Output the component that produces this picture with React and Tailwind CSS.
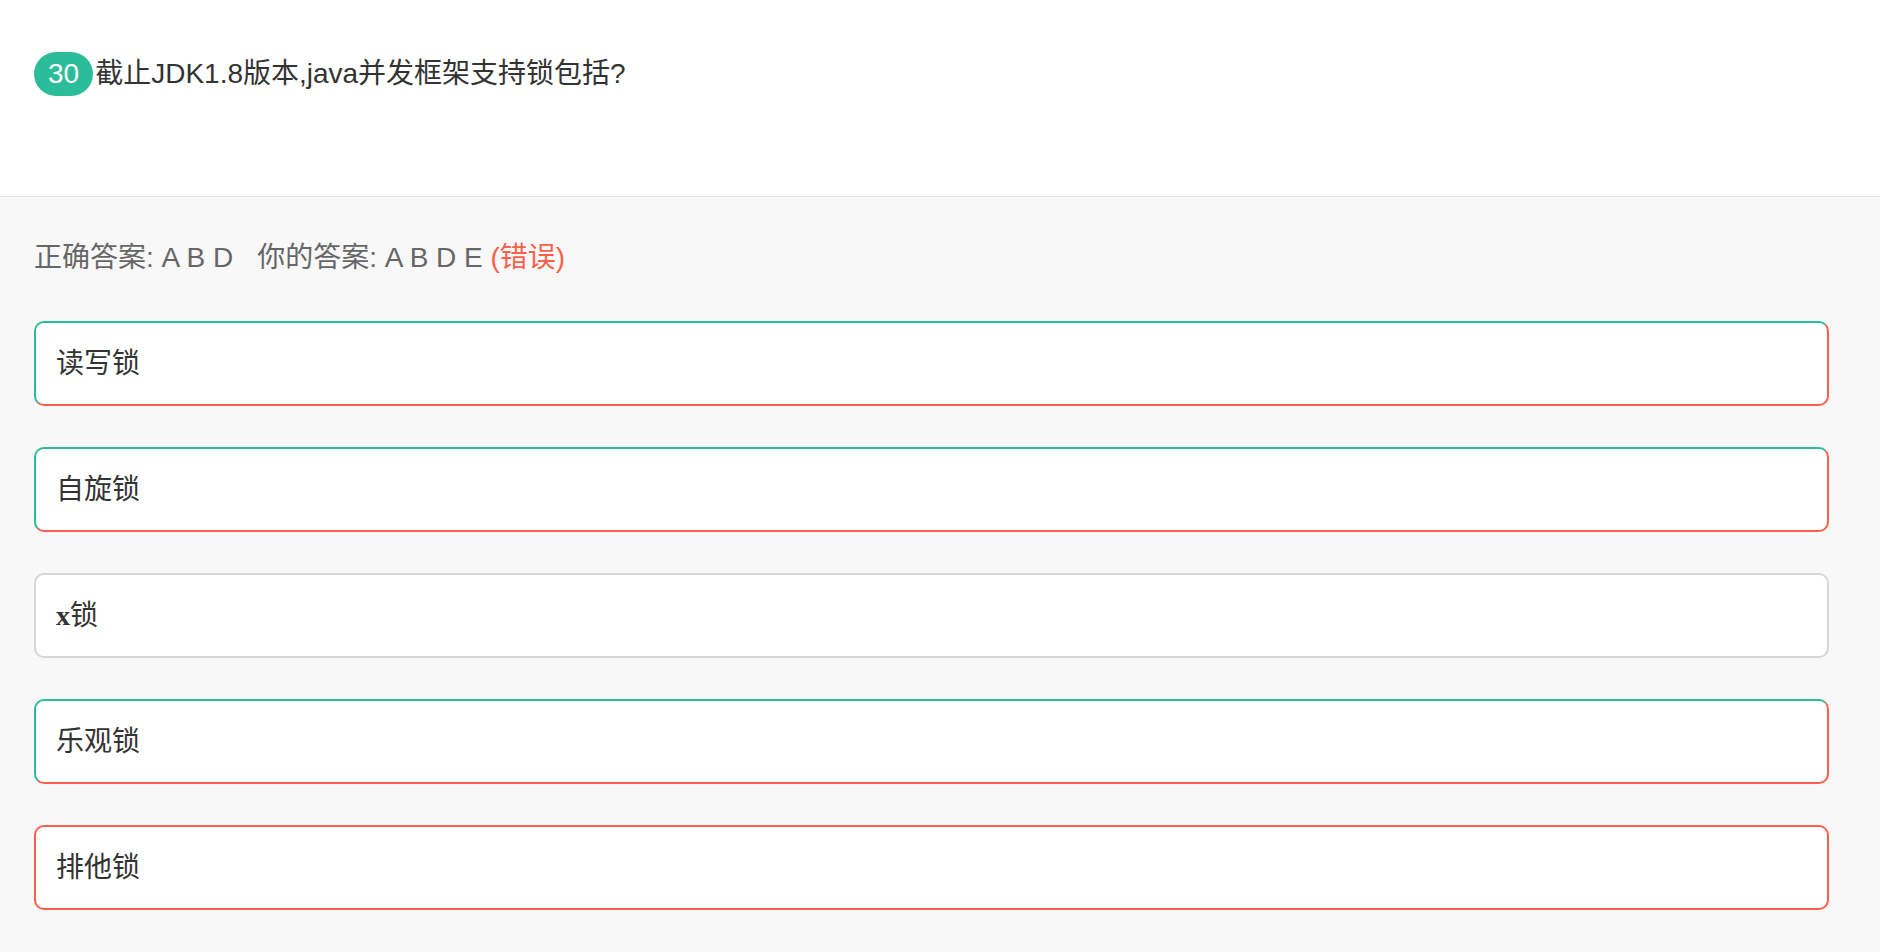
const OPTIONS = [
  { id: "A", text: "读写锁", state: "correct" },
  { id: "B", text: "自旋锁", state: "correct" },
  { id: "C", text: "x锁", state: "none" },
  { id: "D", text: "乐观锁", state: "correct" },
  { id: "E", text: "排他锁", state: "wrong" },
];

const BORDER_STYLES = {
  correct:
    "border-t-[#2bbc9a] border-l-[#2bbc9a] border-r-[#fd5f4b] border-b-[#fd5f4b]",
  wrong: "border-[#fd5f4b]",
  none: "border-[#d6d6d6]",
};

const SANS = "font-['Liberation_Sans','Noto_Sans_CJK_SC',sans-serif]";

// latin letters fall back to a bold serif in the original
function OptionText({ text }) {
  return text.split(/([a-zA-Z]+)/).map((part, i) =>
    /^[a-zA-Z]+$/.test(part) ? (
      <span key={i} className="font-bold">
        {part}
      </span>
    ) : (
      part
    )
  );
}

export default function App() {
  return (
    <div className={`min-h-[952px] bg-[#f8f8f8] ${SANS}`}>
      {/* question header */}
      <div className="h-[197px] bg-white border-b border-[#e6e6e6] pt-[52px] pl-[34px]">
        <div className="flex items-center">
          <span className="h-[44px] px-[14px] rounded-full bg-[#2bbc9a] text-white text-[28px] leading-[44px]">
            30
          </span>
          <span className="ml-[2px] text-[28px] leading-[44px] text-[#333]">
            截止JDK1.8版本,java并发框架支持锁包括?
          </span>
        </div>
      </div>

      {/* answers */}
      <div className="pt-[41px] pl-[34px] pr-[51px] pb-[43px]">
        <p className="text-[28px] leading-[40px] text-[#666] mb-[43px]">
          正确答案: A B D<span className="ml-[24px]">你的答案: A B D E</span>{" "}
          <span className="text-[#fd5f4b]">(错误)</span>
        </p>

        <div className="flex flex-col gap-[41px]">
          {OPTIONS.map((o) => (
            <div
              key={o.id}
              className={`h-[85px] flex items-center pl-5 bg-white rounded-[10px] border-2 ${BORDER_STYLES[o.state]}`}
            >
              <span className="text-[28px] text-[#333] font-['Liberation_Serif','Noto_Sans_CJK_SC',serif]">
                <OptionText text={o.text} />
              </span>
            </div>
          ))}
        </div>
      </div>
    </div>
  );
}
